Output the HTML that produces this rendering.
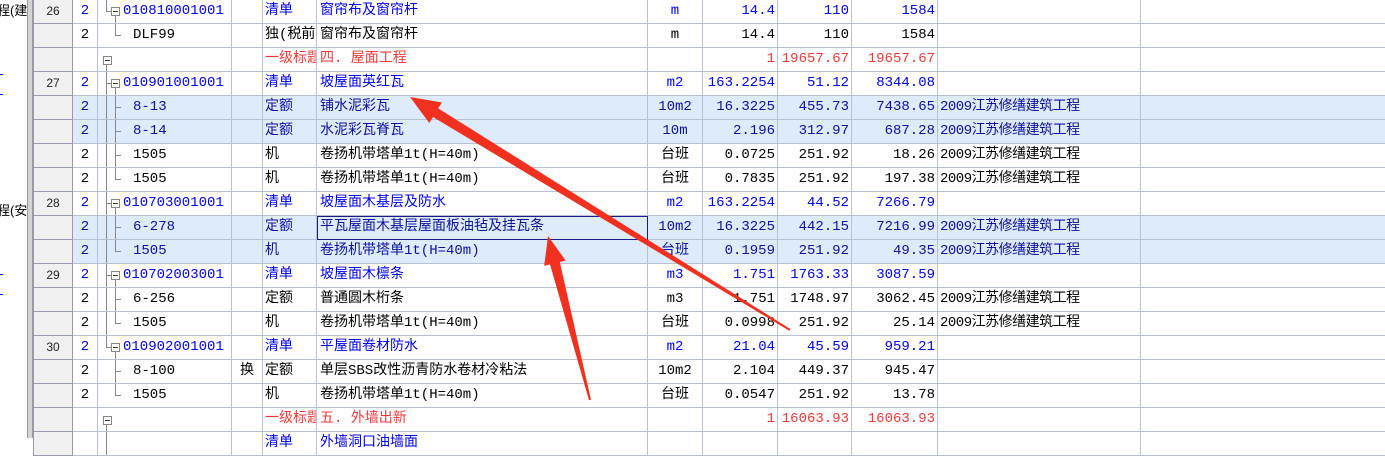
<!DOCTYPE html>
<html><head><meta charset="utf-8"><style>
body{margin:0;width:1385px;height:438px;overflow:hidden;background:#fff;position:relative;font-family:"Liberation Mono","Noto Sans CJK SC",monospace;font-size:14px}
.lp{position:absolute;left:0;top:0;width:27px;height:438px;background:#fff;font-family:"Liberation Sans","Noto Sans CJK SC",sans-serif;font-size:13px;overflow:hidden;white-space:nowrap}
.strip{position:absolute;left:27px;top:0;width:6px;height:438px;background:#d4d4d4;border-left:1px solid #9a9a9a;border-right:1px solid #9a9a9a;box-sizing:border-box}
table{position:absolute;left:33px;top:-1px;border-collapse:collapse;table-layout:fixed;width:1352px}
td{border:1px solid #b9c1d1;height:23px;padding:0;white-space:nowrap;overflow:hidden;line-height:23px}
td.rh{background:#f0f0f0;border-color:#9a9aa6;font-family:"Liberation Sans",sans-serif;font-size:12px;text-align:center;color:#222}
td.l{text-align:center}
td.n{text-align:right;padding-right:2px}
td.u{text-align:center}
td.nm{padding-left:3px}
td.ty{padding-left:2px}
td.pj{padding-left:2px;font-size:14px;letter-spacing:-0.5px}
.B td:not(.rh){color:#0000f0}
.K td:not(.rh){color:#000}
.R td:not(.rh){color:#f03a3a}
.H td:not(.rh){background:#ddebfb;color:#10109a}
.t{position:relative;height:23px}
.t i{position:absolute;display:block}
.of{left:8px;top:0;bottom:0;border-left:1px solid #888}
.ot{left:8px;top:0;height:12px;border-left:1px solid #888}
.ob{left:8px;top:16px;bottom:0;border-left:1px solid #888}
.oh{left:8px;top:11px;width:5px;border-top:1px solid #888}
.bx{left:13px;top:7px;width:7px;height:7px;border:1px solid #888;background:#fff}
.bx:after,.bo:after{content:"";position:absolute;left:1px;top:3px;width:5px;border-top:1px solid #333}
.bo{left:5px;top:8px;width:7px;height:7px;border:1px solid #888;background:#fff}
.cb{left:17px;top:16px;bottom:0;border-left:1px solid #888}
.cf{left:17px;top:0;bottom:0;border-left:1px solid #888}
.ct{left:17px;top:0;height:12px;border-left:1px solid #888}
.ch{left:17px;top:11px;width:6px;border-top:1px solid #888}
.t span{position:absolute;top:0}
.ic{left:25px}.cc{left:35px}
.sel{outline:1px solid #1a1a8a;outline-offset:-1px}
</style></head><body>
<div class="lp">
<div style="position:absolute;left:-3px;top:0;color:#000">程(建筑</div>
<div style="position:absolute;left:0;top:64px;width:3px;height:10px;border-bottom:1px solid #00c"></div>
<div style="position:absolute;left:0;top:84px;width:3px;height:10px;border-bottom:1px solid #00c"></div>
<div style="position:absolute;left:-3px;top:200px;color:#000">程(安装</div>
<div style="position:absolute;left:0;top:264px;width:3px;height:10px;border-bottom:1px solid #00c"></div>
<div style="position:absolute;left:0;top:284px;width:3px;height:10px;border-bottom:1px solid #00c"></div>
</div>
<div class="strip"></div>
<table>
<colgroup><col style="width:39px"><col style="width:25px"><col style="width:134px"><col style="width:31px"><col style="width:54px"><col style="width:331px"><col style="width:55px"><col style="width:75px"><col style="width:74px"><col style="width:86px"><col style="width:203px"><col style="width:245px"></colgroup>
<tr class="B"><td class="rh">26</td><td class="l">2</td><td><div class="t"><i class="ot"></i><i class="oh"></i><i class="bx"></i><i class="cb"></i><span class="ic">010810001001</span></div></td><td></td><td class="ty">清单</td><td class="nm">窗帘布及窗帘杆</td><td class="u">m</td><td class="n">14.4</td><td class="n">110</td><td class="n">1584</td><td></td><td></td></tr>
<tr class="K"><td class="rh"></td><td class="l">2</td><td><div class="t"><i class="ct"></i><i class="ch"></i><span class="cc">DLF99</span></div></td><td></td><td class="ty">独(税前</td><td class="nm">窗帘布及窗帘杆</td><td class="u">m</td><td class="n">14.4</td><td class="n">110</td><td class="n">1584</td><td></td><td></td></tr>
<tr class="R"><td class="rh"></td><td class="l"></td><td><div class="t"><i class="bo"></i><i class="ob"></i></div></td><td></td><td class="ty">一级标题</td><td class="nm">四. 屋面工程</td><td class="u"></td><td class="n">1</td><td class="n">19657.67</td><td class="n">19657.67</td><td></td><td></td></tr>
<tr class="B"><td class="rh">27</td><td class="l">2</td><td><div class="t"><i class="of"></i><i class="oh"></i><i class="bx"></i><i class="cb"></i><span class="ic">010901001001</span></div></td><td></td><td class="ty">清单</td><td class="nm">坡屋面英红瓦</td><td class="u">m2</td><td class="n">163.2254</td><td class="n">51.12</td><td class="n">8344.08</td><td></td><td></td></tr>
<tr class="H"><td class="rh"></td><td class="l">2</td><td><div class="t"><i class="of"></i><i class="cf"></i><i class="ch"></i><span class="cc">8-13</span></div></td><td></td><td class="ty">定额</td><td class="nm">铺水泥彩瓦</td><td class="u">10m2</td><td class="n">16.3225</td><td class="n">455.73</td><td class="n">7438.65</td><td class="pj">2009江苏修缮建筑工程</td><td></td></tr>
<tr class="H"><td class="rh"></td><td class="l">2</td><td><div class="t"><i class="of"></i><i class="cf"></i><i class="ch"></i><span class="cc">8-14</span></div></td><td></td><td class="ty">定额</td><td class="nm">水泥彩瓦脊瓦</td><td class="u">10m</td><td class="n">2.196</td><td class="n">312.97</td><td class="n">687.28</td><td class="pj">2009江苏修缮建筑工程</td><td></td></tr>
<tr class="K"><td class="rh"></td><td class="l">2</td><td><div class="t"><i class="of"></i><i class="cf"></i><i class="ch"></i><span class="cc">1505</span></div></td><td></td><td class="ty">机</td><td class="nm">卷扬机带塔单1t(H=40m)</td><td class="u">台班</td><td class="n">0.0725</td><td class="n">251.92</td><td class="n">18.26</td><td class="pj">2009江苏修缮建筑工程</td><td></td></tr>
<tr class="K"><td class="rh"></td><td class="l">2</td><td><div class="t"><i class="of"></i><i class="ct"></i><i class="ch"></i><span class="cc">1505</span></div></td><td></td><td class="ty">机</td><td class="nm">卷扬机带塔单1t(H=40m)</td><td class="u">台班</td><td class="n">0.7835</td><td class="n">251.92</td><td class="n">197.38</td><td class="pj">2009江苏修缮建筑工程</td><td></td></tr>
<tr class="B"><td class="rh">28</td><td class="l">2</td><td><div class="t"><i class="of"></i><i class="oh"></i><i class="bx"></i><i class="cb"></i><span class="ic">010703001001</span></div></td><td></td><td class="ty">清单</td><td class="nm">坡屋面木基层及防水</td><td class="u">m2</td><td class="n">163.2254</td><td class="n">44.52</td><td class="n">7266.79</td><td></td><td></td></tr>
<tr class="H"><td class="rh"></td><td class="l">2</td><td><div class="t"><i class="of"></i><i class="cf"></i><i class="ch"></i><span class="cc">6-278</span></div></td><td></td><td class="ty">定额</td><td class="nm sel">平瓦屋面木基层屋面板油毡及挂瓦条</td><td class="u">10m2</td><td class="n">16.3225</td><td class="n">442.15</td><td class="n">7216.99</td><td class="pj">2009江苏修缮建筑工程</td><td></td></tr>
<tr class="H"><td class="rh"></td><td class="l">2</td><td><div class="t"><i class="of"></i><i class="ct"></i><i class="ch"></i><span class="cc">1505</span></div></td><td></td><td class="ty">机</td><td class="nm">卷扬机带塔单1t(H=40m)</td><td class="u">台班</td><td class="n">0.1959</td><td class="n">251.92</td><td class="n">49.35</td><td class="pj">2009江苏修缮建筑工程</td><td></td></tr>
<tr class="B"><td class="rh">29</td><td class="l">2</td><td><div class="t"><i class="of"></i><i class="oh"></i><i class="bx"></i><i class="cb"></i><span class="ic">010702003001</span></div></td><td></td><td class="ty">清单</td><td class="nm">坡屋面木檩条</td><td class="u">m3</td><td class="n">1.751</td><td class="n">1763.33</td><td class="n">3087.59</td><td></td><td></td></tr>
<tr class="K"><td class="rh"></td><td class="l">2</td><td><div class="t"><i class="of"></i><i class="cf"></i><i class="ch"></i><span class="cc">6-256</span></div></td><td></td><td class="ty">定额</td><td class="nm">普通圆木桁条</td><td class="u">m3</td><td class="n">1.751</td><td class="n">1748.97</td><td class="n">3062.45</td><td class="pj">2009江苏修缮建筑工程</td><td></td></tr>
<tr class="K"><td class="rh"></td><td class="l">2</td><td><div class="t"><i class="of"></i><i class="ct"></i><i class="ch"></i><span class="cc">1505</span></div></td><td></td><td class="ty">机</td><td class="nm">卷扬机带塔单1t(H=40m)</td><td class="u">台班</td><td class="n">0.0998</td><td class="n">251.92</td><td class="n">25.14</td><td class="pj">2009江苏修缮建筑工程</td><td></td></tr>
<tr class="B"><td class="rh">30</td><td class="l">2</td><td><div class="t"><i class="ot"></i><i class="oh"></i><i class="bx"></i><i class="cb"></i><span class="ic">010902001001</span></div></td><td></td><td class="ty">清单</td><td class="nm">平屋面卷材防水</td><td class="u">m2</td><td class="n">21.04</td><td class="n">45.59</td><td class="n">959.21</td><td></td><td></td></tr>
<tr class="K"><td class="rh"></td><td class="l">2</td><td><div class="t"><i class="cf"></i><i class="ch"></i><span class="cc">8-100</span></div></td><td class="u">换</td><td class="ty">定额</td><td class="nm">单层SBS改性沥青防水卷材冷粘法</td><td class="u">10m2</td><td class="n">2.104</td><td class="n">449.37</td><td class="n">945.47</td><td></td><td></td></tr>
<tr class="K"><td class="rh"></td><td class="l">2</td><td><div class="t"><i class="ct"></i><i class="ch"></i><span class="cc">1505</span></div></td><td></td><td class="ty">机</td><td class="nm">卷扬机带塔单1t(H=40m)</td><td class="u">台班</td><td class="n">0.0547</td><td class="n">251.92</td><td class="n">13.78</td><td></td><td></td></tr>
<tr class="R"><td class="rh"></td><td class="l"></td><td><div class="t"><i class="bo"></i><i class="ob"></i></div></td><td></td><td class="ty">一级标题</td><td class="nm">五. 外墙出新</td><td class="u"></td><td class="n">1</td><td class="n">16063.93</td><td class="n">16063.93</td><td></td><td></td></tr>
<tr class="B"><td class="rh"></td><td class="l"></td><td><div class="t"><i class="of"></i></div></td><td></td><td class="ty">清单</td><td class="nm">外墙洞口油墙面</td><td class="u"></td><td class="n"></td><td class="n"></td><td class="n"></td><td></td><td></td></tr>
</table>
<svg style="position:absolute;left:0;top:0" width="1385" height="438">
<polygon fill="#f2301f" points="410,97 441.9,102.5 438.2,108.4 790.5,329.1 789.5,330.9 433,117 429.3,123"/>
<polygon fill="#f2301f" points="548,236 565.6,260.5 559.8,262 591,399.75 589,400.25 550,264.4 544.2,265.9"/>
</svg>
</body></html>
